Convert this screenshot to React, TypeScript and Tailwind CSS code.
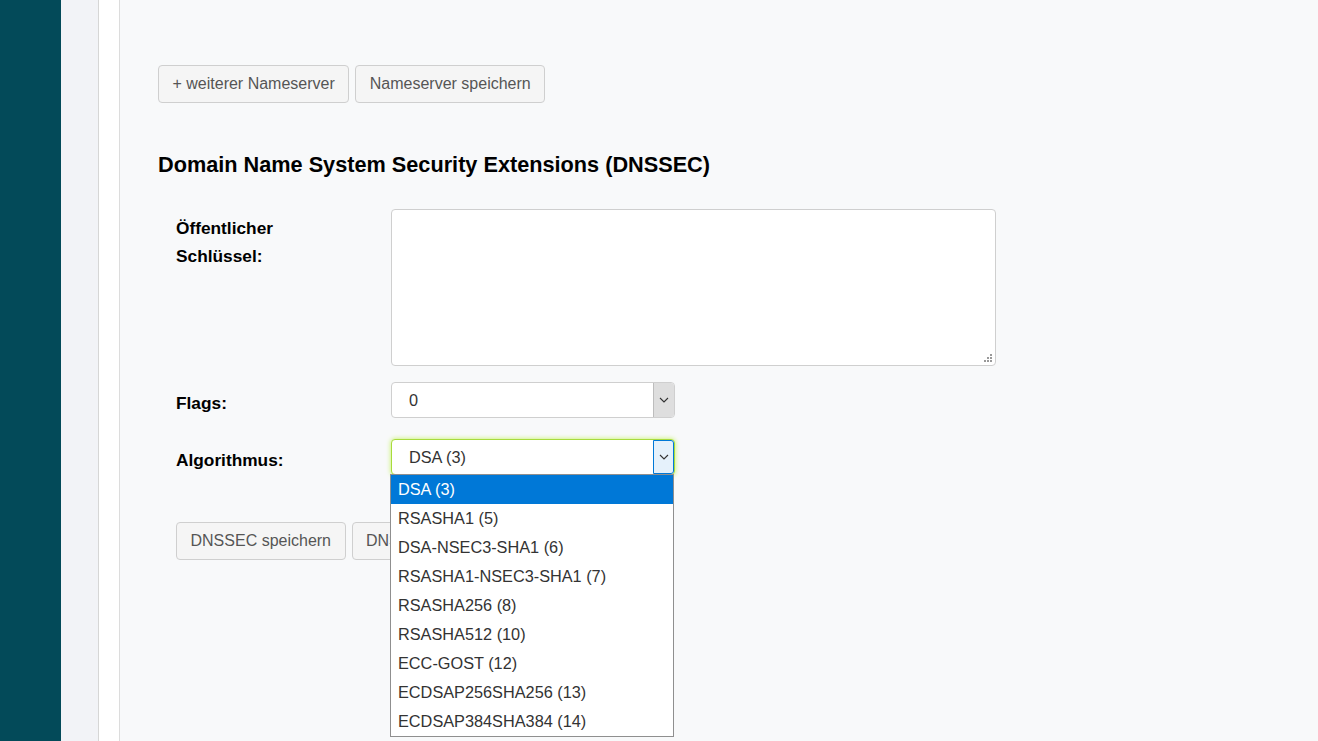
import React from 'react';

const algorithms = [
  'DSA (3)',
  'RSASHA1 (5)',
  'DSA-NSEC3-SHA1 (6)',
  'RSASHA1-NSEC3-SHA1 (7)',
  'RSASHA256 (8)',
  'RSASHA512 (10)',
  'ECC-GOST (12)',
  'ECDSAP256SHA256 (13)',
  'ECDSAP384SHA384 (14)',
];

function Chevron() {
  return (
    <svg width="10" height="6" viewBox="0 0 10 6" fill="none">
      <path d="M1 1l4 4 4-4" stroke="#333" strokeWidth="1.1" />
    </svg>
  );
}

function Button({ children }: { children: React.ReactNode }) {
  return (
    <button className="h-[38px] px-[13.5px] rounded-[4px] border border-[#cfcfcf] bg-[#f5f5f5] text-[16px] text-[#555] leading-none">
      {children}
    </button>
  );
}

export default function App() {
  return (
    <div
      className="flex h-[741px] w-full overflow-hidden bg-[#f8f9fa]"
      style={{ fontFamily: '"Liberation Sans", Arial, sans-serif' }}
    >
      {/* Sidebar */}
      <div className="w-[61px] shrink-0 bg-[#034a59]" />
      <div className="w-[38px] shrink-0 bg-[#f2f3f7] border-r border-[#d6d6d6]" />
      <div className="w-[21px] shrink-0 bg-white border-r border-[#dcdcdc]" />

      {/* Main */}
      <main className="flex-1 pl-[38px] pt-[65px]">
        <div className="flex gap-[6px]">
          <Button>+ weiterer Nameserver</Button>
          <Button>Nameserver speichern</Button>
        </div>

        <h2 className="mt-[49px] text-[21.7px] font-bold text-black leading-[26px]">
          Domain Name System Security Extensions (DNSSEC)
        </h2>

        <div className="pl-[18px] mt-[31px]">
          {/* Public key */}
          <div className="flex">
            <label className="w-[215px] pt-[5px] text-[17.3px] font-bold text-black leading-[28px]">
              Öffentlicher
              <br />
              Schlüssel:
            </label>
            <div className="relative">
              <textarea className="block w-[605px] h-[157px] resize-none rounded-[4px] border border-[#cfcfcf] bg-white outline-none" />
              <div className="absolute right-[4px] bottom-[4px] grid grid-cols-3 gap-[1px]">
                <span />
                <span />
                <span className="w-[2px] h-[2px] bg-[#999]" />
                <span />
                <span className="w-[2px] h-[2px] bg-[#999]" />
                <span className="w-[2px] h-[2px] bg-[#999]" />
                <span className="w-[2px] h-[2px] bg-[#999]" />
                <span className="w-[2px] h-[2px] bg-[#999]" />
                <span className="w-[2px] h-[2px] bg-[#999]" />
              </div>
            </div>
          </div>

          {/* Flags */}
          <div className="flex mt-[16px]">
            <label className="w-[215px] pt-[7px] text-[17.3px] font-bold text-black leading-[28px]">
              Flags:
            </label>
            <div className="flex w-[284px] h-[36px] rounded-[4px] border border-[#cfcfcf] bg-white overflow-hidden">
              <div className="flex-1 flex items-center pl-[17px] text-[16.3px] text-[#333]">0</div>
              <div className="w-[21px] flex items-center justify-center bg-[#dedede] border-l border-[#bdbdbd]">
                <Chevron />
              </div>
            </div>
          </div>

          {/* Algorithm */}
          <div className="flex mt-[21px]">
            <label className="w-[215px] pt-[7px] text-[17.3px] font-bold text-black leading-[28px]">
              Algorithmus:
            </label>
            <div className="relative">
              <div className="flex w-[284px] h-[36px] rounded-[4px] border border-[#a8dc3c] bg-white shadow-[0_0_5px_#c2f25a]">
                <div className="flex-1 flex items-center pl-[17px] text-[16.3px] text-[#333]">DSA (3)</div>
                <div className="w-[21px] flex items-center justify-center bg-[#e5f1fb] border border-[#0078d7] rounded-r-[3px]">
                  <Chevron />
                </div>
              </div>

              {/* Open option list */}
              <ul className="absolute left-[-1px] top-[35px] z-10 w-[284px] border border-[#8f8f8f] bg-white py-0">
                {algorithms.map((a, i) => (
                  <li
                    key={a}
                    className={`h-[29px] flex items-center pl-[7px] text-[16.3px] ${
                      i === 0 ? 'bg-[#0078d7] text-white' : 'text-[#333]'
                    }`}
                  >
                    {a}
                  </li>
                ))}
              </ul>
            </div>
          </div>

          <div className="flex gap-[6px] mt-[47px]">
            <Button>DNSSEC speichern</Button>
            <Button>DNSSEC löschen</Button>
          </div>
        </div>
      </main>
    </div>
  );
}
